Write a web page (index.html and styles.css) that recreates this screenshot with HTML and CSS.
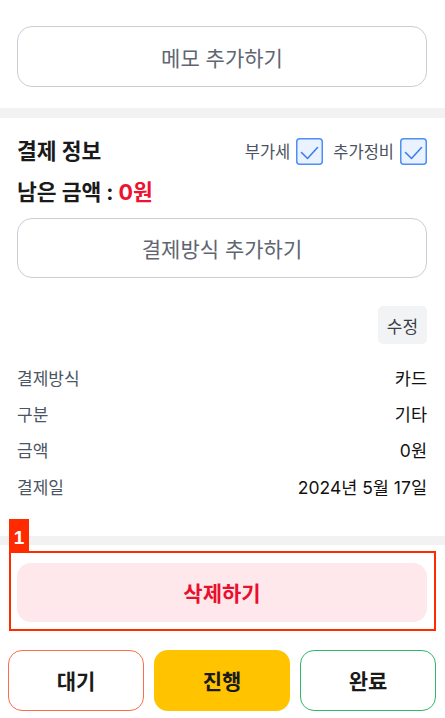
FILE: index.html
```html
<!DOCTYPE html>
<html lang="ko">
<head>
<meta charset="utf-8">
<link rel="stylesheet" href="styles.css">
</head>
<body>
<div class="page">
  <section class="memo-section">
    <button class="outline-btn">메모 추가하기</button>
  </section>
  <div class="divider"></div>
  <section class="pay-section">
    <div class="title-row">
      <h2 class="title">결제 정보</h2>
      <div class="checks">
        <label class="check"><span>부가세</span>
          <svg width="27" height="27" viewBox="0 0 27 27"><rect x="0.75" y="0.75" width="25.5" height="25.5" rx="3" fill="#eaf2ff" stroke="#4d8ef7" stroke-width="1.5"/><path d="M5.5 14.5 L11.5 20.5 L21.5 9.5" fill="none" stroke="#3d7fee" stroke-width="1.6" stroke-linecap="round" stroke-linejoin="round"/></svg>
        </label>
        <label class="check"><span>추가정비</span>
          <svg width="27" height="27" viewBox="0 0 27 27"><rect x="0.75" y="0.75" width="25.5" height="25.5" rx="3" fill="#eaf2ff" stroke="#4d8ef7" stroke-width="1.5"/><path d="M5.5 14.5 L11.5 20.5 L21.5 9.5" fill="none" stroke="#3d7fee" stroke-width="1.6" stroke-linecap="round" stroke-linejoin="round"/></svg>
        </label>
      </div>
    </div>
    <p class="remain">남은 금액 : <span class="red">0원</span></p>
    <button class="outline-btn pay-btn">결제방식 추가하기</button>
    <div class="edit-row"><button class="edit-btn">수정</button></div>
    <dl class="info">
      <div class="info-row"><dt>결제방식</dt><dd>카드</dd></div>
      <div class="info-row"><dt>구분</dt><dd>기타</dd></div>
      <div class="info-row"><dt>금액</dt><dd>0원</dd></div>
      <div class="info-row"><dt>결제일</dt><dd>2024년 5월 17일</dd></div>
    </dl>
  </section>
  <div class="divider thin"></div>
  <section class="delete-section">
    <button class="delete-btn">삭제하기</button>
    <div class="annot"><span class="annot-label">1</span></div>
  </section>
  <nav class="status-bar">
    <button class="status wait">대기</button>
    <button class="status progress">진행</button>
    <button class="status done">완료</button>
  </nav>
</div>
</body>
</html>
```

FILE: styles.css
```css
* { box-sizing: border-box; }
html, body { margin: 0; padding: 0; background: #fff; }
body {
  font-family: Inter, "Noto Sans CJK KR", sans-serif;
  color: #1a1a1a;
  width: 445px;
}
button { font-family: inherit; cursor: pointer; }
.memo-section { padding: 26px 18px 21px 17px; }
.outline-btn {
  display: block;
  width: 100%;
  height: 61px;
  border: 1px solid #c9ced6;
  border-radius: 15px;
  background: #fff;
  color: #5f6672;
  font-size: 21px;
  font-weight: 400;
}
.divider { height: 10px; background: #f2f2f2; }
.divider.thin { height: 9px; }
.pay-section { padding: 20px 18px 31px 17px; }
.title-row { display: flex; justify-content: space-between; align-items: center; height: 26px; }
.title { margin: 0; font-size: 21.5px; font-weight: 700; color: #1a1a1a; line-height: 26px; }
.checks { display: flex; align-items: center; gap: 10px; }
.check { display: flex; align-items: center; gap: 6px; font-size: 16.5px; color: #4b5260; }
.check svg { display: block; }
.remain { margin: 14px 0 0; font-size: 21.5px; font-weight: 700; line-height: 29px; color: #1a1a1a; }
.red { color: #f0102f; }
.pay-btn { margin-top: 11px; height: 60px; }
.edit-row { display: flex; justify-content: flex-end; margin-top: 28px; }
.edit-btn {
  width: 49px; height: 38px;
  border: none; border-radius: 5px;
  background: #f2f3f5;
  color: #3a3f48;
  font-size: 17px;
  padding: 0;
}
.info { margin: 15px 0 0; }
.info-row { display: flex; justify-content: space-between; align-items: center; height: 36.4px; }
.info-row dt { font-size: 17px; color: #4b5563; }
.info-row dd { margin: 0; font-size: 17.5px; color: #111; }
.delete-section { position: relative; padding: 18px 18px 0 17px; }
.delete-btn {
  display: block; width: 100%; height: 59px;
  border: none; border-radius: 14px;
  background: #ffe8ec;
  color: #e8102e;
  font-size: 21px; font-weight: 700;
}
.annot {
  position: absolute;
  top: 6px; left: 9px; right: 9px; height: 80px;
  border: 2px solid #ff2a00;
  pointer-events: none;
}
.annot-label {
  position: absolute;
  left: -2px; bottom: 100%;
  width: 20px; height: 34px;
  background: #ff2a00;
  color: #fff;
  font-family: "Liberation Sans", Arial, sans-serif;
  font-weight: 700;
  font-size: 19px;
  line-height: 30px;
  text-align: center;
  padding-top: 4px;
}
.status-bar {
  display: grid;
  grid-template-columns: repeat(3, 136px);
  gap: 10px;
  padding: 28px 9px 8px 8px;
}
.status {
  height: 61px;
  border-radius: 14px;
  background: #fff;
  font-size: 21px;
  font-weight: 700;
  color: #1a1a1a;
}
.wait { border: 1px solid #ff6b4a; }
.progress { border: none; background: #ffc300; }
.done { border: 1px solid #2eb86a; }
```
